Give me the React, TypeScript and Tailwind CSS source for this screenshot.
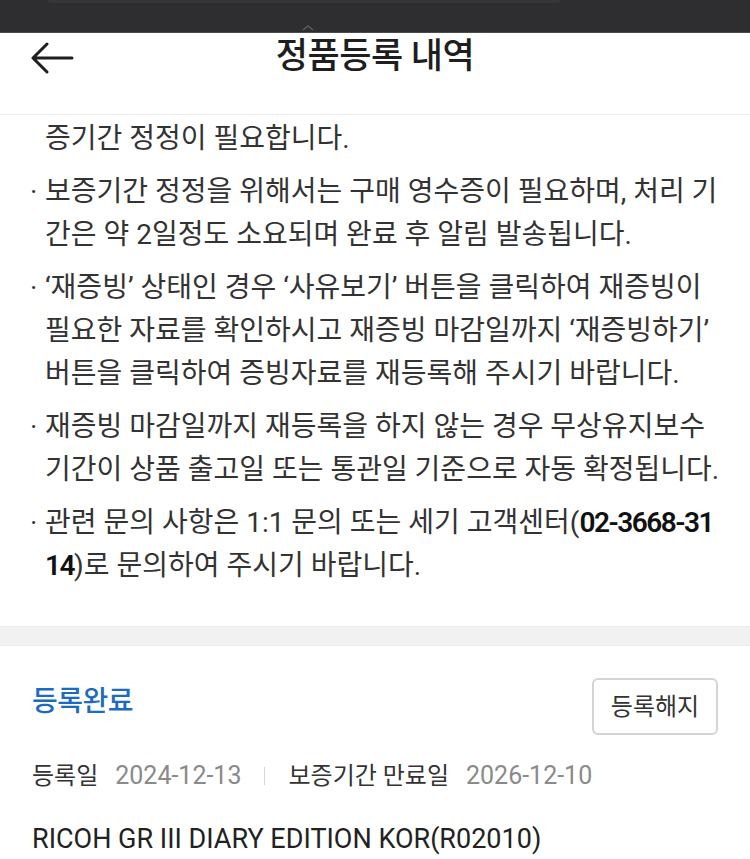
import React from 'react'

const FONT = "font-['Roboto','Noto_Sans_CJK_KR',sans-serif]"

function Bullet({ children }: { children: React.ReactNode }) {
  return (
    <div className="flex mb-[10px]">
      <span className="w-[15px] shrink-0 text-left -ml-[15px]">·</span>
      <div>{children}</div>
    </div>
  )
}

function Line({ children }: { children: React.ReactNode }) {
  return <span className="block whitespace-nowrap">{children}</span>
}

export default function App() {
  return (
    <div className={`${FONT} w-[750px] min-h-screen bg-white text-[#333] overflow-hidden`}>
      {/* status strip */}
      <div className="h-[33px] bg-[#2e2e30] border-b border-[#4b4b4d] flex flex-col justify-between">
        <div className="ml-[48px] w-[512px] h-[3px] bg-[#36363a] rounded-b-[10px]" />
        <div className="pl-[302px] pb-[1px]">
          <svg width="12" height="6" viewBox="0 0 12 6">
            <path d="M1 5 L6 1 L11 5" fill="none" stroke="#5c5c60" strokeWidth="1.6" />
          </svg>
        </div>
      </div>

      {/* header */}
      <div className="h-[82px] border-b border-[#ececec]">
        <div className="relative h-[48px] flex items-center justify-center">
          <button className="absolute left-[30px] top-[9px]">
            <svg width="44" height="32" viewBox="0 0 44 32">
              <path d="M42 16 H4 M17 2 L3 16 L17 30" fill="none" stroke="#1e1e1e" strokeWidth="3" strokeLinecap="round" strokeLinejoin="round" />
            </svg>
          </button>
          <h1 className="text-[35px] font-medium text-[#1e1e1e] tracking-[-0.5px]">정품등록 내역</h1>
        </div>
      </div>

      {/* notice */}
      <div className="pl-[45px] pt-[2px] pb-[29px] text-[28px] leading-[43px]">
        <div className="mb-[10px]">
          <Line>증기간 정정이 필요합니다.</Line>
        </div>
        <Bullet>
          <Line>보증기간 정정을 위해서는 구매 영수증이 필요하며, 처리 기</Line>
          <Line>간은 약 2일정도 소요되며 완료 후 알림 발송됩니다.</Line>
        </Bullet>
        <Bullet>
          <Line>‘재증빙’ 상태인 경우 ‘사유보기’ 버튼을 클릭하여 재증빙이</Line>
          <Line>필요한 자료를 확인하시고 재증빙 마감일까지 ‘재증빙하기’</Line>
          <Line>버튼을 클릭하여 증빙자료를 재등록해 주시기 바랍니다.</Line>
        </Bullet>
        <Bullet>
          <Line>재증빙 마감일까지 재등록을 하지 않는 경우 무상유지보수</Line>
          <Line>기간이 상품 출고일 또는 통관일 기준으로 자동 확정됩니다.</Line>
        </Bullet>
        <Bullet>
          <Line>
            관련 문의 사항은 1:1 문의 또는 세기 고객센터(<b className="font-semibold tracking-[-1.5px] text-[#111]">02-3668-31</b>
          </Line>
          <Line>
            <b className="font-semibold tracking-[-1.5px] text-[#111]">14</b>)로 문의하여 주시기 바랍니다.
          </Line>
        </Bullet>
      </div>

      <div className="h-[20px] bg-[#f1f1f1] border-y border-[#e9e9e9]" />

      {/* registration card */}
      <div className="px-[32px] pt-[32px]">
        <div className="flex items-center justify-between">
          <span className="mb-[10px] text-[28px] font-medium text-[#1c6bc3] tracking-[-0.5px]">등록완료</span>
          <button className="w-[126px] h-[57px] border-2 border-[#d4d4d4] rounded-[6px] text-[24px] text-[#333]">
            등록해지
          </button>
        </div>

        <div className="mt-[26px] flex items-center text-[24px] leading-[30px]">
          <span className="text-[#333]">등록일</span>
          <span className="ml-[17px] text-[#8a8a8a] text-[25px]">2024-12-13</span>
          <span className="mx-[23px] w-px h-[18px] bg-[#d6d6d6]" />
          <span className="text-[#333]">보증기간 만료일</span>
          <span className="ml-[17px] text-[#8a8a8a] text-[25px]">2026-12-10</span>
        </div>

        <div className="mt-[32px] text-[27px] leading-[32px] text-[#222]">
          RICOH GR III DIARY EDITION KOR(R02010)
        </div>
      </div>
    </div>
  )
}
